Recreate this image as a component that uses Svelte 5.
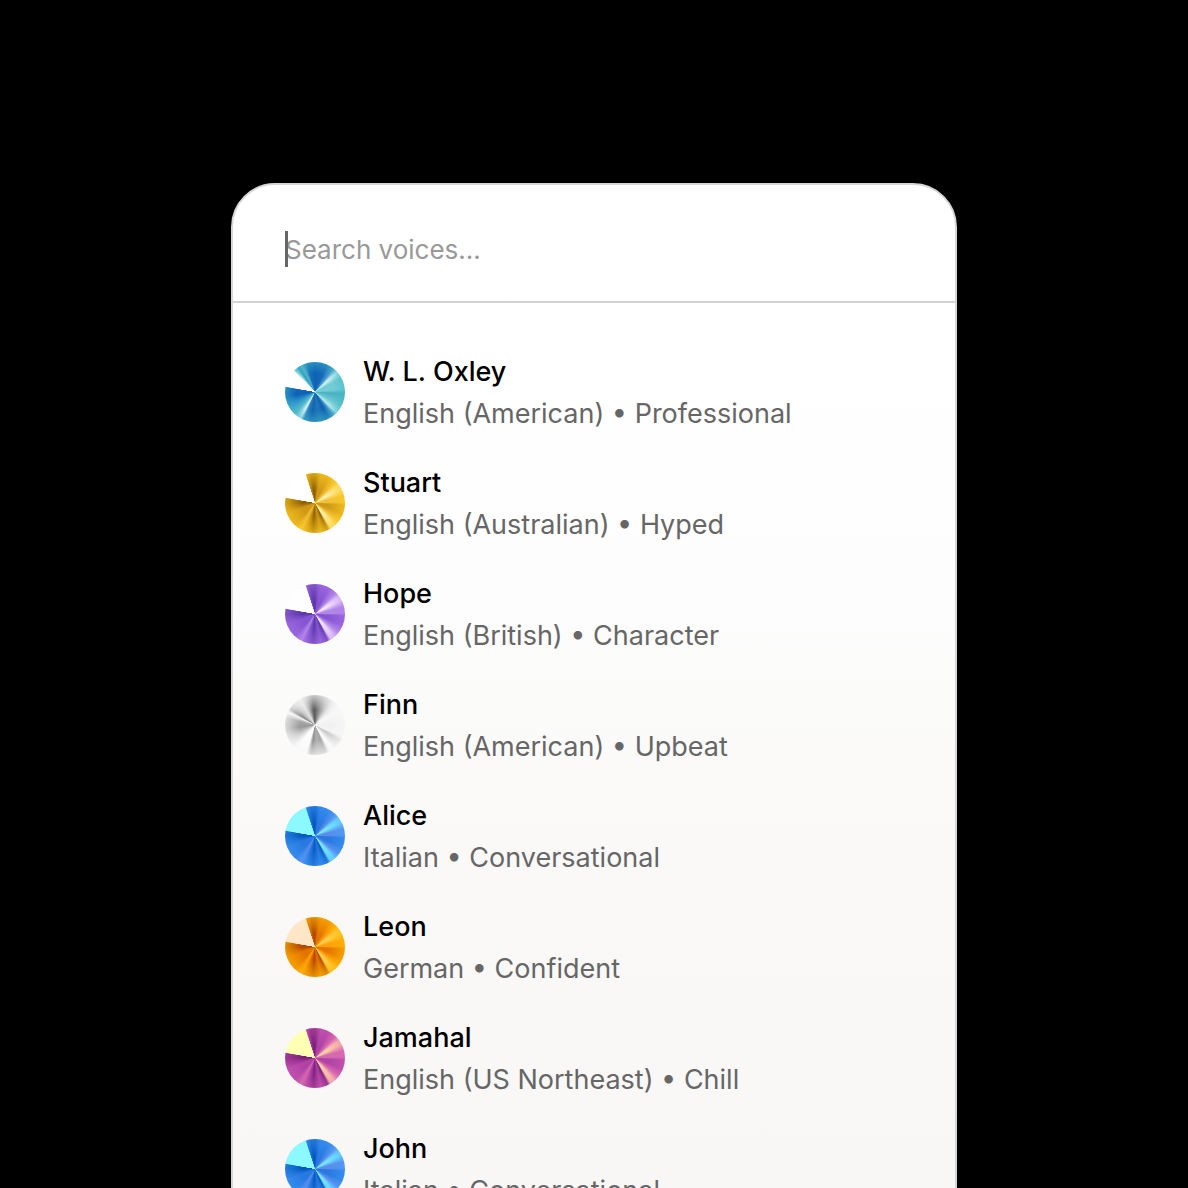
<script>
    let query = "";

    const voices = [
        { name: "W. L. Oxley", language: "English (American)", style: "Professional", color: "teal" },
        { name: "Stuart", language: "English (Australian)", style: "Hyped", color: "gold" },
        { name: "Hope", language: "English (British)", style: "Character", color: "purple" },
        { name: "Finn", language: "English (American)", style: "Upbeat", color: "silver" },
        { name: "Alice", language: "Italian", style: "Conversational", color: "blue" },
        { name: "Leon", language: "German", style: "Confident", color: "orange" },
        { name: "Jamahal", language: "English (US Northeast)", style: "Chill", color: "pink" },
        { name: "John", language: "Italian", style: "Conversational", color: "blue" },
    ];

    $: filtered = voices.filter((voice) =>
        voice.name.toLowerCase().includes(query.toLowerCase())
    );
</script>

<main>
    <section class="card">
        <div class="search">
            {#if !query}
                <span class="caret"></span>
            {/if}
            <input
                type="text"
                bind:value={query}
                placeholder="Search voices..."
                aria-label="Search voices"
            />
        </div>

        <ul>
            {#each filtered as voice}
                <li>
                    <span class="avatar {voice.color}"></span>
                    <div class="info">
                        <p class="name">{voice.name}</p>
                        <p class="detail">{voice.language} • {voice.style}</p>
                    </div>
                </li>
            {/each}
        </ul>
    </section>
</main>

<style>
    :global(body) {
        background-color: #000;
    }

    main {
        box-sizing: border-box;
        height: 100vh;
        overflow: hidden;
        padding: 183px 24px 0;
        font-family: Inter, "Liberation Sans", sans-serif;
    }

    .card {
        box-sizing: border-box;
        max-width: 726px;
        margin: 0 auto;
        border: 2px solid #d6d6d6;
        border-radius: 44px;
        background: linear-gradient(#fff 0%, #fefefe 30%, #faf9f8 60%, #f8f7f5 100%);
    }

    .search {
        position: relative;
        display: flex;
        align-items: center;
        height: 116px;
        padding: 0 52px;
        border-bottom: 2px solid #d2d2d2;
    }

    .caret {
        position: absolute;
        left: 52px;
        top: 46px;
        width: 3px;
        height: 36px;
        background-color: #666;
    }

    input {
        width: 100%;
        height: 40px;
        margin-top: 12px;
        padding: 0;
        border: none;
        outline: none;
        background: transparent;
        color: #000;
        font-family: inherit;
        font-size: 26px;
    }

    input::placeholder {
        color: #999;
        opacity: 1;
    }

    ul {
        display: flex;
        flex-direction: column;
        gap: 27px;
        margin: 0;
        padding: 48px 52px;
        list-style: none;
    }

    li {
        display: flex;
        align-items: center;
        gap: 18px;
    }

    p {
        margin: 0;
        font-size: 27px;
        line-height: 42px;
        white-space: nowrap;
    }

    .name {
        color: #000;
        font-weight: 500;
    }

    .detail {
        color: #666;
    }

    .avatar {
        flex: none;
        width: 60px;
        height: 60px;
        margin-bottom: 2px;
        border-radius: 50%;
        background:
            conic-gradient(
                transparent 279deg,
                var(--gap) 281deg,
                var(--gap) 341deg,
                transparent 343deg
            ),
            radial-gradient(circle, transparent 30%, var(--rim) 72%),
            conic-gradient(
                var(--deep) 0deg,
                var(--mid) 12deg,
                var(--mid) 28deg,
                var(--tone) 44deg,
                var(--light) 54deg,
                var(--light) 62deg,
                var(--tone) 76deg,
                var(--tone) 88deg,
                var(--mid) 94deg,
                var(--mid) 112deg,
                var(--tone) 128deg,
                var(--light) 140deg,
                var(--light) 148deg,
                var(--deep) 154deg,
                var(--mid) 168deg,
                var(--deep) 184deg,
                var(--mid) 198deg,
                var(--tone) 208deg,
                var(--mid) 222deg,
                var(--mid) 248deg,
                var(--deep) 270deg,
                var(--deep) 281deg,
                var(--gap) 281deg,
                var(--gap) 341deg,
                var(--mid) 341deg,
                var(--deep) 352deg
            );
    }

    .gold {
        --deep: #8f6000;
        --mid: #cf9816;
        --tone: #efc035;
        --light: #ffeea8;
        --gap: #fff;
        --rim: #ffcc22aa;
    }

    .purple {
        --deep: #5b36a8;
        --mid: #8654d2;
        --tone: #b088e6;
        --light: #f6e2ff;
        --gap: #fefefe;
        --rim: #b47cf077;
    }

    .blue {
        --deep: #0458c0;
        --mid: #2778e0;
        --tone: #5a8ceb;
        --light: #76e6ff;
        --gap: #8cf8ff;
        --rim: #48a4ff77;
    }

    .orange {
        --deep: #b04600;
        --mid: #e47400;
        --tone: #ff9f0c;
        --light: #ffd04e;
        --gap: #ffe6c6;
        --rim: #ffb800aa;
    }

    .pink {
        --deep: #7c1f7c;
        --mid: #b042a6;
        --tone: #d569ae;
        --light: #ffd0a8;
        --gap: #ffffb4;
        --rim: #dc64b866;
    }

    .teal {
        background:
            conic-gradient(
                transparent 279deg,
                #fff 281deg,
                #fff 314deg,
                transparent 317deg
            ),
            radial-gradient(circle, transparent 44%, #40b8c888 72%),
            conic-gradient(
                #0c62b4 0deg,
                #1668b8 24deg,
                #4498cc 38deg,
                #d4f4f4 48deg,
                #70ccd4 62deg,
                #74ccd4 84deg,
                #48b0c4 94deg,
                #6cc8d0 118deg,
                #b8ecec 134deg,
                #3c90c8 142deg,
                #1060b0 152deg,
                #1e78b8 170deg,
                #1464b0 188deg,
                #2c84c0 202deg,
                #d8f8f8 209deg,
                #5cbccc 222deg,
                #3098cc 240deg,
                #0c60b8 262deg,
                #1468b8 281deg,
                #fff 281deg,
                #fff 314deg,
                #a4e4e4 318deg,
                #2c9cc0 326deg,
                #58b4cc 334deg,
                #1870b8 344deg,
                #0c62b4 360deg
            );
    }

    .silver {
        background:
            radial-gradient(circle, transparent 36%, #f8f8f8bb 72%),
            conic-gradient(
                #606060 0deg,
                #808080 10deg,
                #b4b4b4 26deg,
                #e4e4e4 40deg,
                #f8f8f8 54deg,
                #f0f0f0 90deg,
                #f4f4f4 112deg,
                #c8c8c8 122deg,
                #dcdcdc 132deg,
                #fcfcfc 144deg,
                #f8f8f8 150deg,
                #a4a4a4 158deg,
                #b0b0b0 174deg,
                #909090 188deg,
                #fcfcfc 198deg,
                #fcfcfc 220deg,
                #d0d0d0 238deg,
                #989898 262deg,
                #a8a8a8 284deg,
                #f8f8f8 296deg,
                #888888 302deg,
                #c8c8c8 316deg,
                #e4e4e4 330deg,
                #a8a8a8 342deg,
                #606060 354deg
            );
    }
</style>
